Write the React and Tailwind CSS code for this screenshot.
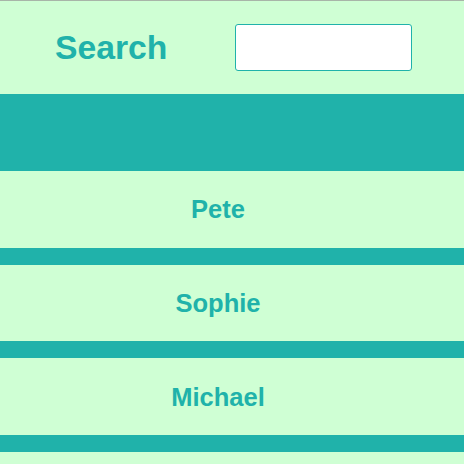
const PEOPLE = ["Pete", "Sophie", "Michael"];

export default function App() {
  return (
    <div
      className="min-h-[464px] bg-[#cfffd4] border-t border-[#a8b5a8] text-[#20b2aa]"
      style={{ fontFamily: '"Liberation Sans", Arial, sans-serif' }}
    >
      {/* Header */}
      <header className="h-[93px] flex items-center">
        <h1 className="ml-[55px] text-[33.7px] font-bold leading-none">Search</h1>
        <input
          type="text"
          className="ml-[68px] w-[177px] h-[47px] bg-white border border-[#20b2aa] rounded-[3px] outline-none px-2"
        />
      </header>

      {/* List */}
      <div className="h-[77px] bg-[#20b2aa]" />
      <ul>
        {PEOPLE.map((name) => (
          <li key={name}>
            <div className="h-[76.67px] w-[436px] flex items-center justify-center text-[25.5px] font-bold">
              {name}
            </div>
            <div className="h-[17px] bg-[#20b2aa]" />
          </li>
        ))}
      </ul>
    </div>
  );
}
